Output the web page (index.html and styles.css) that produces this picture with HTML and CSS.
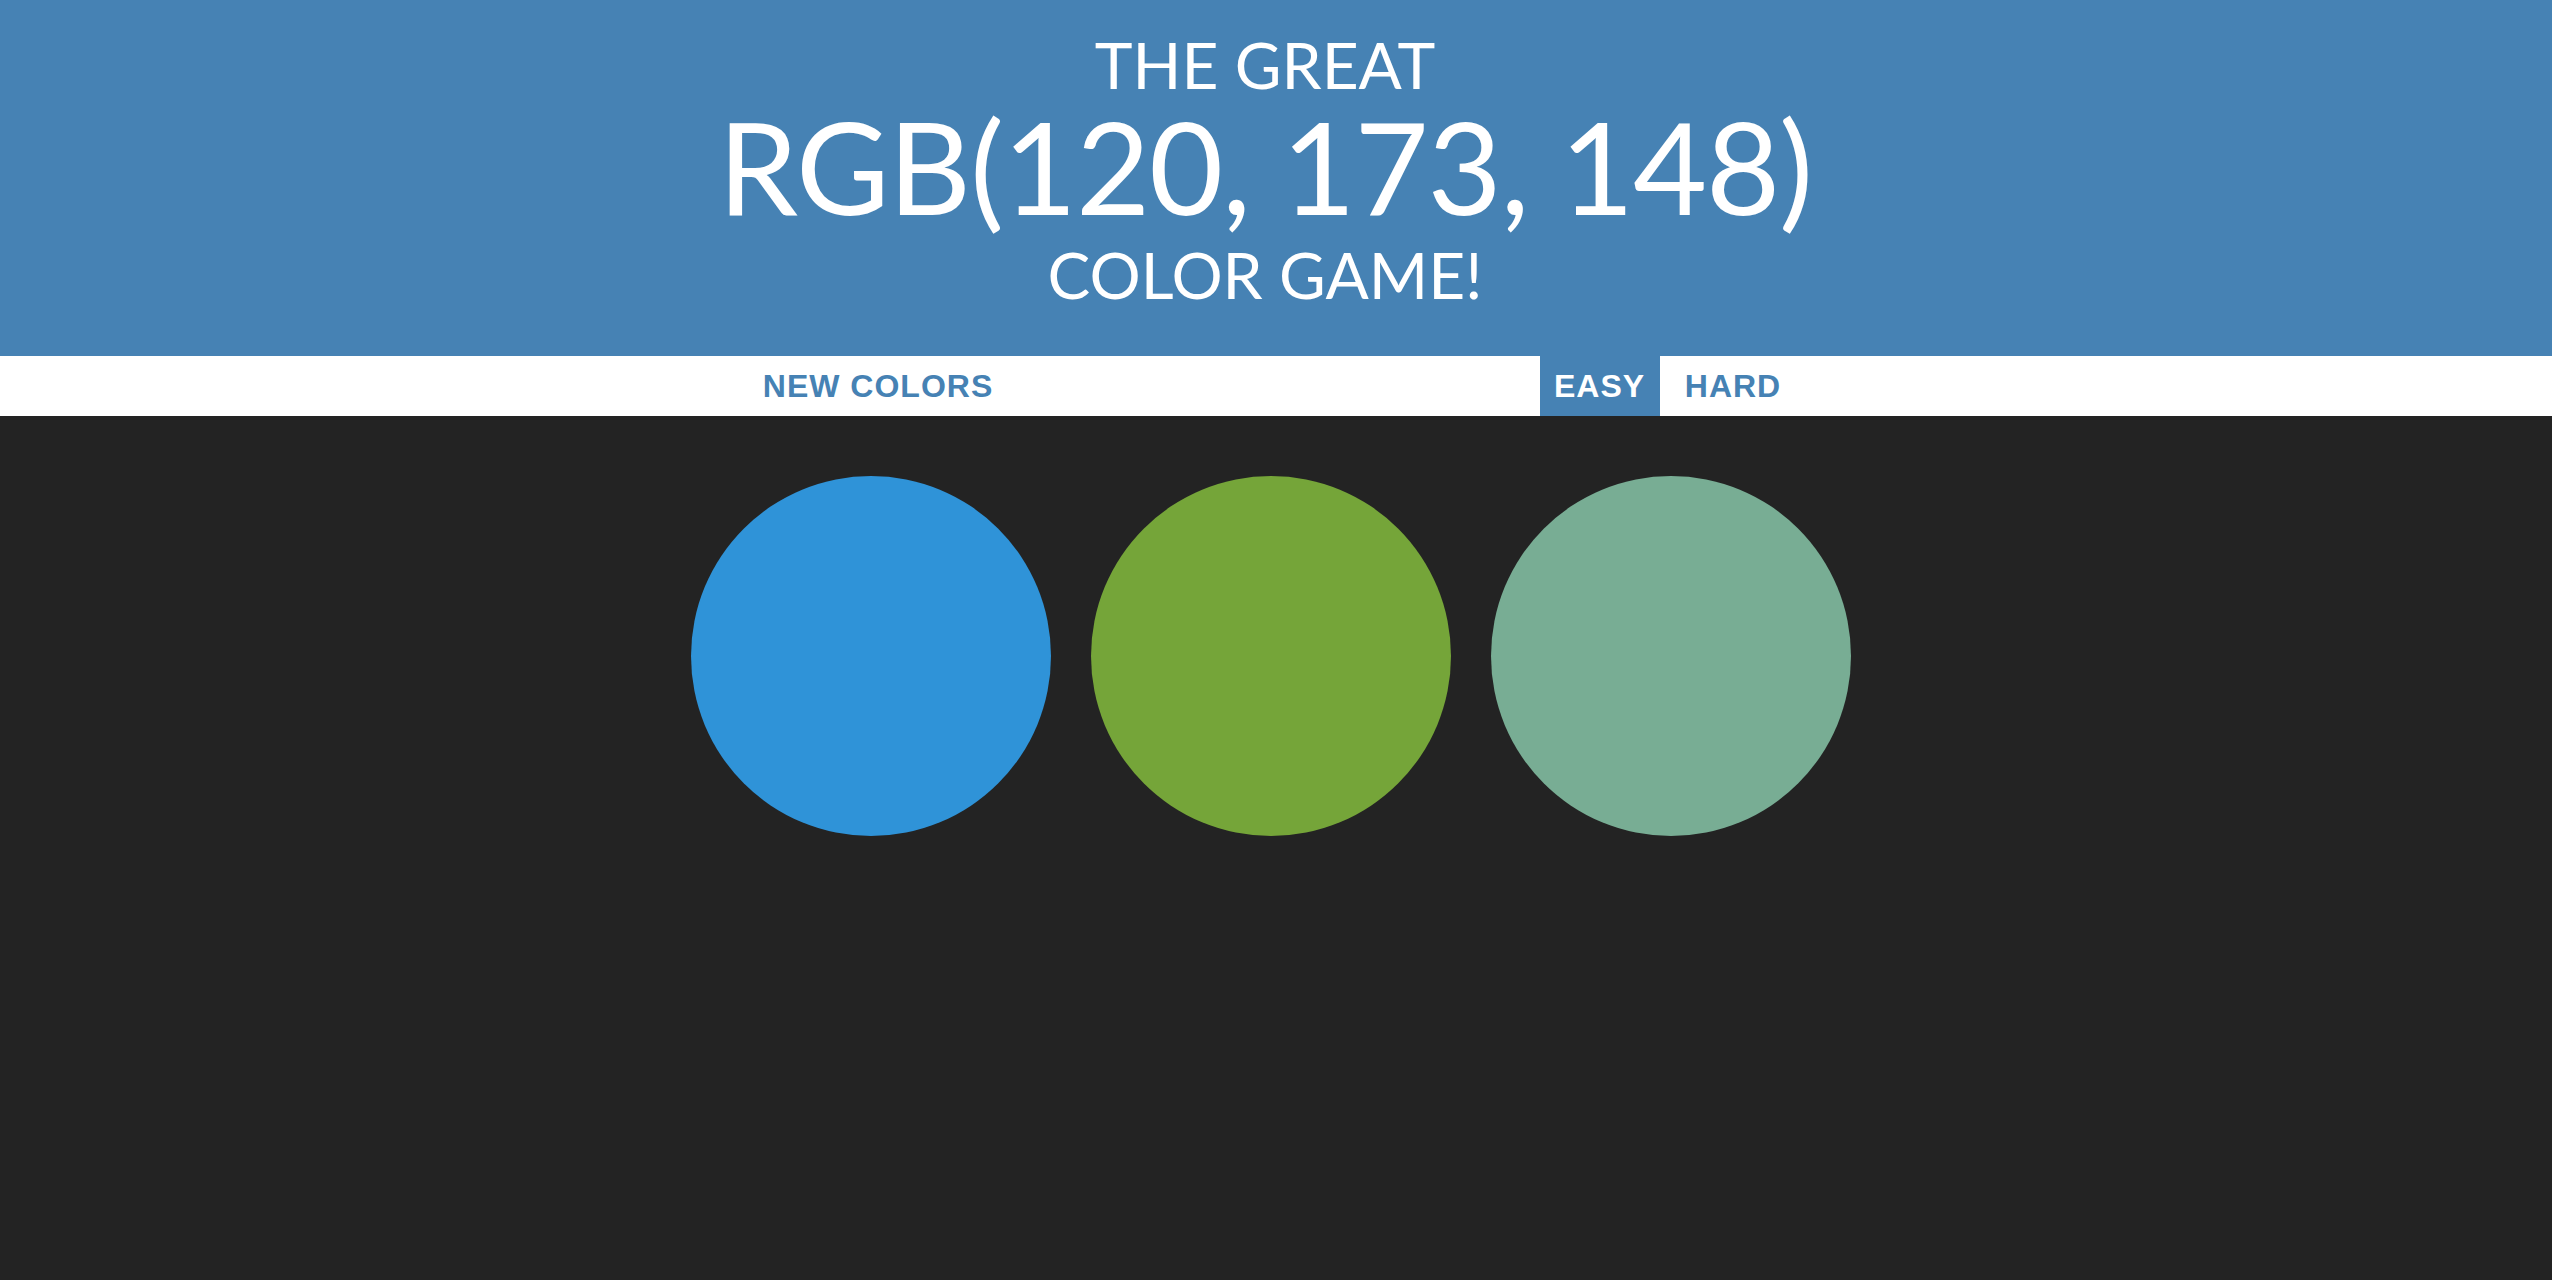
FILE: index.html
```html
<!DOCTYPE html>
<html lang="en">
<head>
<meta charset="utf-8">
<title>Color Game</title>
<link rel="stylesheet" href="styles.css">
</head>
<body>
<header class="title">
  <div class="title-line">The Great</div>
  <div class="title-rgb">RGB(120, 173, 148)</div>
  <div class="title-line title-last">Color Game!</div>
</header>
<nav class="stripe">
  <button class="btn btn-reset">New Colors</button>
  <span class="message"></span>
  <button class="btn btn-mode selected">Easy</button>
  <button class="btn btn-mode btn-hard">Hard</button>
</nav>
<main class="page">
  <div class="board">
    <div class="square sq-blue"></div>
    <div class="square sq-green"></div>
    <div class="square sq-teal"></div>
  </div>
</main>
</body>
</html>
```
FILE: styles.css
```css
html, body {
  margin: 0;
  padding: 0;
}
* {
  box-sizing: border-box;
}
body {
  background: #232323;
  font-family: Lato, "Liberation Sans", sans-serif;
  min-height: 1280px;
}
.title {
  background: #4682b4;
  color: #ffffff;
  text-align: center;
  text-transform: uppercase;
  padding: 30px 22px 0 0;
  height: 356px;
  display: flex;
  flex-direction: column;
  align-items: center;
}
.title-line {
  font-size: 64px;
  line-height: 70.4px;
  font-weight: 400;
}
.title-rgb {
  font-size: 128px;
  line-height: 132px;
  font-weight: 400;
  letter-spacing: -1.2px;
}
.title-last {
  line-height: 85px;
}
.stripe {
  background: #ffffff;
  height: 60px;
  display: flex;
  justify-content: center;
  align-items: stretch;
  gap: 12px;
  padding-right: 7px;
}
.btn {
  border: none;
  background: none;
  margin: 0;
  padding: 0;
  font-family: "Liberation Sans", Arial, sans-serif;
  font-weight: 700;
  font-size: 32px;
  letter-spacing: 1px;
  text-transform: uppercase;
  color: #4682b4;
  text-align: center;
  height: 60px;
}
.btn-reset { width: 255px; }
.message { width: 510px; }
.btn-mode { width: 120px; }
.btn-hard { width: 123px; }
.selected {
  background: #4682b4;
  color: #ffffff;
}
.page {
  padding-right: 10px;
}
.board {
  width: 1200px;
  margin: 40px auto 0;
  display: flex;
}
.square {
  width: 360px;
  height: 360px;
  margin: 20px;
  border-radius: 50%;
}
.sq-blue { background: rgb(47, 147, 216); }
.sq-green { background: rgb(117, 165, 57); }
.sq-teal { background: rgb(120, 173, 148); }
```
